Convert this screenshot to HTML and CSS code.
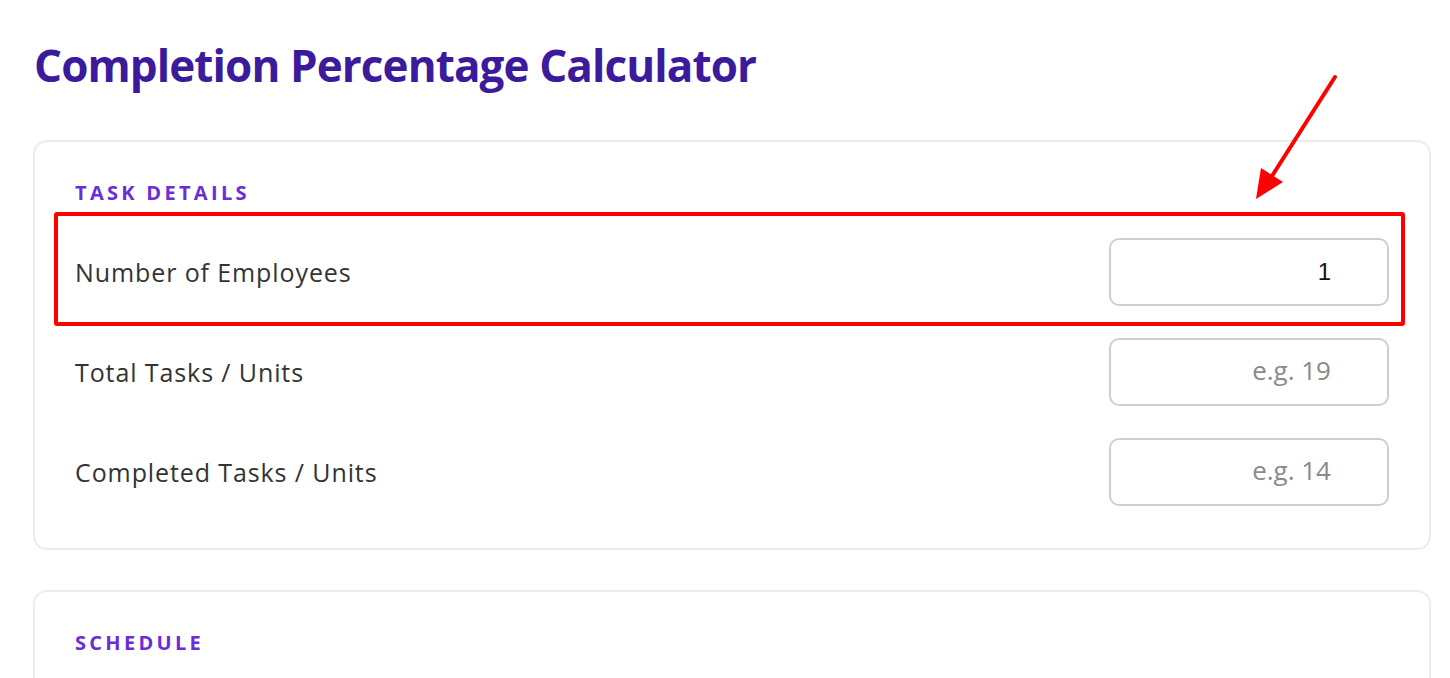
FILE: index.html
```html
<!DOCTYPE html>
<html lang="en">
<head>
<meta charset="utf-8">
<title>Completion Percentage Calculator</title>
<link rel="stylesheet" href="styles.css">
</head>
<body>
<main class="page">
  <h1 class="title">Completion Percentage Calculator</h1>

  <section class="card">
    <h2 class="card-heading">TASK DETAILS</h2>
    <div class="rows">
      <div class="row highlighted">
        <label class="row-label" for="emp">Number of Employees</label>
        <input class="row-input" id="emp" type="text" value="1">
        <div class="highlight-box"></div>
      </div>
      <div class="row">
        <label class="row-label" for="total">Total Tasks / Units</label>
        <input class="row-input" id="total" type="text" placeholder="e.g. 19">
      </div>
      <div class="row">
        <label class="row-label" for="done">Completed Tasks / Units</label>
        <input class="row-input" id="done" type="text" placeholder="e.g. 14">
      </div>
    </div>
  </section>

  <section class="card card-tall">
    <h2 class="card-heading">SCHEDULE</h2>
  </section>

  <svg class="arrow" width="100" height="140" viewBox="0 0 100 140">
    <line x1="83" y1="5" x2="20" y2="104" stroke="#ff0000" stroke-width="4" stroke-linecap="round"/>
    <polygon points="4,127 9,96 31,110" fill="#ff0000"/>
  </svg>
</main>
</body>
</html>
```
FILE: styles.css
```css
* { box-sizing: border-box; }

html, body {
  margin: 0;
  padding: 0;
  background: #ffffff;
  height: 100%;
  overflow: hidden;
}

.page {
  position: relative;
  padding: 30px 19px 0 33px;
  font-family: "Open Sans", "Noto Sans", sans-serif;
}

.title {
  margin: 0 0 40px 1px;
  font-family: "Open Sans", sans-serif;
  font-weight: 700;
  font-size: 44px;
  line-height: 70px;
  letter-spacing: -0.9px;
  color: #3b1b9c;
}

.card {
  border: 2px solid #ececec;
  border-radius: 14px;
  padding: 38px 40px 42px 40px;
  margin-bottom: 40px;
  background: #ffffff;
}

.card-tall {
  min-height: 200px;
}

.card-heading {
  margin: 0 0 32px 0;
  font-family: "Open Sans", sans-serif;
  font-weight: 700;
  font-size: 20px;
  line-height: 26px;
  letter-spacing: 3.3px;
  color: #6a2ed8;
}

.rows {
  display: flex;
  flex-direction: column;
  gap: 32px;
}

.row {
  position: relative;
  display: flex;
  align-items: center;
  justify-content: space-between;
  height: 68px;
}

.row-label {
  font-size: 25px;
  letter-spacing: 0.9px;
  color: #333333;
}

.row-input {
  width: 280px;
  height: 68px;
  border: 2px solid #cfcfcf;
  border-radius: 10px;
  padding: 0 56px 0 12px;
  text-align: right;
  font-family: "Liberation Sans", Arial, sans-serif;
  font-size: 24px;
  color: #111111;
  background: #ffffff;
  outline: none;
}

.row-input::placeholder {
  font-family: "Open Sans", sans-serif;
  font-size: 26px;
  color: #8a8a8a;
}

.highlight-box {
  position: absolute;
  left: -21px;
  right: -16px;
  top: -26px;
  bottom: -20px;
  border: 4px solid #ff0000;
  border-radius: 3px;
  pointer-events: none;
}

.arrow {
  position: absolute;
  left: 1252px;
  top: 72px;
}
```
